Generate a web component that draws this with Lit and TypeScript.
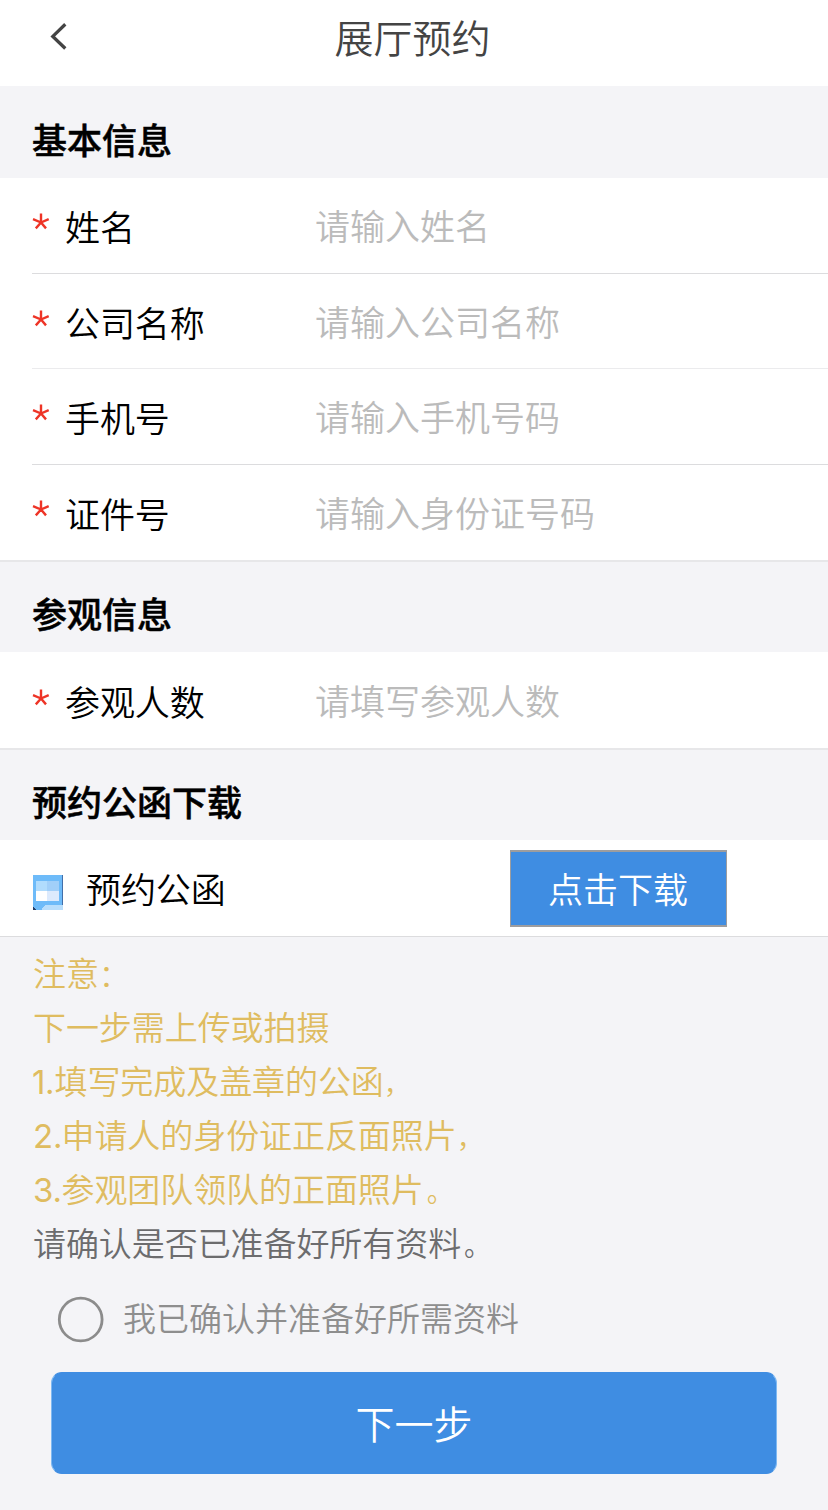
import { LitElement, html, css } from "lit";
import { customElement, property, state } from "lit/decorators.js";

@customElement("form-row")
class FormRow extends LitElement {
  @property() label = "";
  @property() hint = "";

  static styles = css`
    :host { display: block; height: 100%; }
    .row { display: flex; align-items: center; height: 100%; box-sizing: border-box; }
    .star { width: 33px; height: 46px; flex: none; margin-bottom: 7px; }
    .label { width: 250px; flex: none; color: #000; font-size: 35px; line-height: 50px; white-space: nowrap; letter-spacing: -0.1px; }
    .field {
      flex: 1; min-width: 0; border: 0; outline: 0; padding: 0; margin: 0 0 3px; background: transparent;
      font-family: inherit; font-weight: inherit; font-size: 35px; height: 52px; color: #000;
    }
    .field::placeholder { color: #bbb; opacity: 1; }
  `;

  render() {
    return html`<div class="row">
      <svg class="star" viewBox="0 0 33 46" fill="none" stroke="#ee3426" stroke-width="2.4">
        <path d="M9 23.5V14.4M9 23.5L1 20.2M9 23.5L16.7 20.2M9 23.5L3.8 29.4M9 23.5L14 29.4" />
      </svg>
      <span class="label">${this.label}</span>
      <input class="field" placeholder=${this.hint} />
    </div>`;
  }
}

@customElement("app-root")
class AppRoot extends LitElement {
  @state() confirmed = false;

  static styles = css`
    :host {
      display: block; min-height: 1510px; background: #f4f4f7;
      font-family: "Noto Sans CJK SC", sans-serif; font-weight: 350; color: #000;
    }
    .bar { display: grid; grid-template-columns: 120px 1fr 120px; height: 86px; background: #fff; }
    .back { width: 24px; height: 32px; margin: 20px 0 0 47px; }
    .title { margin: 0; text-align: center; font-size: 39px; line-height: 56px; font-weight: inherit; color: #444; padding: 8px 3px 0 0; }
    .section { margin: 0; box-sizing: border-box; height: 90px; padding: 26px 32px 0; font-size: 35px; line-height: 50px; font-weight: 500; -webkit-text-stroke: 0.5px #000; letter-spacing: 0; }
    .section.first { height: 92px; padding-top: 28px; }
    .group { background: #fff; border-bottom: 2px solid #e7e7e9; padding-left: 32px; }
    .cell { box-sizing: border-box; height: 96px; border-bottom: 1px solid #dcdcde; }
    .cell.tight { height: 95px; padding-top: 2px; border-bottom-color: #ebebed; }
    .cell.last { height: 95px; border-bottom: 0; }
    .cell.single { padding-top: 2px; border-bottom: 0; }
    .letter { display: flex; align-items: center; height: 96px; background: #fff; border-bottom: 1px solid #dcdcde; padding-left: 33px; }
    .doc { width: 30px; height: 35px; margin: 8px 23px 0 0; flex: none; }
    .name { width: 424px; font-size: 35px; line-height: 50px; letter-spacing: -0.1px; }
    .download {
      box-sizing: border-box; width: 217px; height: 77px; border: 2px solid #9d9d9f; border-width: 2px 1px;
      background: #3f8de2; color: #fff; font-family: inherit; font-weight: inherit; font-size: 35px; line-height: 50px; padding: 0 1px 0 0; border-radius: 0;
    }
    .notes { padding: 8px 33px 0; font-size: 33px; line-height: 54px; color: #dfbc60; white-space: nowrap; letter-spacing: -0.07px; }
    .line { height: 54px; display: flex; align-items: baseline; }
    .num { font-family: Inter, "Liberation Sans", sans-serif; font-weight: 400; width: 28.5px; flex: none; }
    .num.slim { width: 22.5px; margin-left: -1px; letter-spacing: -0.5px; }
    .colon { font-size: 30px; }
    .comma { font-size: 27px; }
    .stop { margin-left: 3px; font-size: 27px; }
    .ask { color: #6c6c6e; }
    .agree { display: flex; align-items: center; height: 56px; padding: 20px 0 0 57px; gap: 19px; color: #8e8e8e; font-size: 33px; }
    .circle { width: 47px; height: 47px; flex: none; margin-top: 5px; }
    .next {
      display: block; box-sizing: border-box; width: 726px; height: 102px; margin: 27px 0 0 51px; padding: 0 0 2px;
      border: 1px solid #3f8de2; border-left-color: #7fb9f2; border-right-color: #7fb9f2; border-radius: 11px;
      background: #3f8de2; color: #fff; font-family: inherit; font-weight: inherit; font-size: 39px; line-height: 56px;
    }
  `;

  render() {
    return html`
      <header class="bar">
        <svg class="back" viewBox="0 0 24 32" fill="none" stroke="#444" stroke-width="3.3"><path d="M18.3 4.3L5.8 16.4L18.3 28.5" /></svg>
        <h1 class="title">展厅预约</h1>
      </header>
      <h2 class="section first">基本信息</h2>
      <div class="group">
        <div class="cell"><form-row label="姓名" hint="请输入姓名"></form-row></div>
        <div class="cell tight"><form-row label="公司名称" hint="请输入公司名称"></form-row></div>
        <div class="cell"><form-row label="手机号" hint="请输入手机号码"></form-row></div>
        <div class="cell last"><form-row label="证件号" hint="请输入身份证号码"></form-row></div>
      </div>
      <h2 class="section">参观信息</h2>
      <div class="group"><div class="cell single"><form-row label="参观人数" hint="请填写参观人数"></form-row></div></div>
      <h2 class="section">预约公函下载</h2>
      <div class="letter">
        <svg class="doc" viewBox="0 0 30 35" shape-rendering="crispEdges">
          <rect width="30" height="35" fill="#6ebbf9" />
          <path d="M29 0h1v31h-1z" fill="#426fa9" />
          <path d="M3 6h11v10H3z" fill="#b1dcfd" /><path d="M14 6h12v10H14z" fill="#a1cff9" />
          <path d="M3 16h11v10H3z" fill="#fff" /><path d="M14 16h12v10H14z" fill="#dceafd" />
          <path d="M8 35c2-1 2-5 5-5h17v5z" fill="#b9defc" />
          <path d="M0 32l3 3H0z" fill="#243f69" />
        </svg>
        <span class="name">预约公函</span>
        <button class="download">点击下载</button>
      </div>
      <div class="notes">
        <div class="line">注意<span class="colon">：</span></div>
        <div class="line">下一步需上传或拍摄</div>
        <div class="line"><span class="num slim">1.</span>填写完成及盖章的公函<span class="comma">，</span></div>
        <div class="line"><span class="num">2.</span>申请人的身份证正反面照片<span class="comma">，</span></div>
        <div class="line"><span class="num">3.</span>参观团队领队的正面照片<span class="stop">。</span></div>
        <div class="line ask">请确认是否已准备好所有资料<span class="stop">。</span></div>
      </div>
      <div class="agree" @click=${() => (this.confirmed = !this.confirmed)}>
        <svg class="circle" viewBox="0 0 47 47"><circle cx="23.7" cy="23.5" r="21.4" fill=${this.confirmed ? "#3f8de2" : "none"} stroke="#8c8c8c" stroke-width="2.8" /></svg>
        <span>我已确认并准备好所需资料</span>
      </div>
      <button class="next">下一步</button>
    `;
  }
}
